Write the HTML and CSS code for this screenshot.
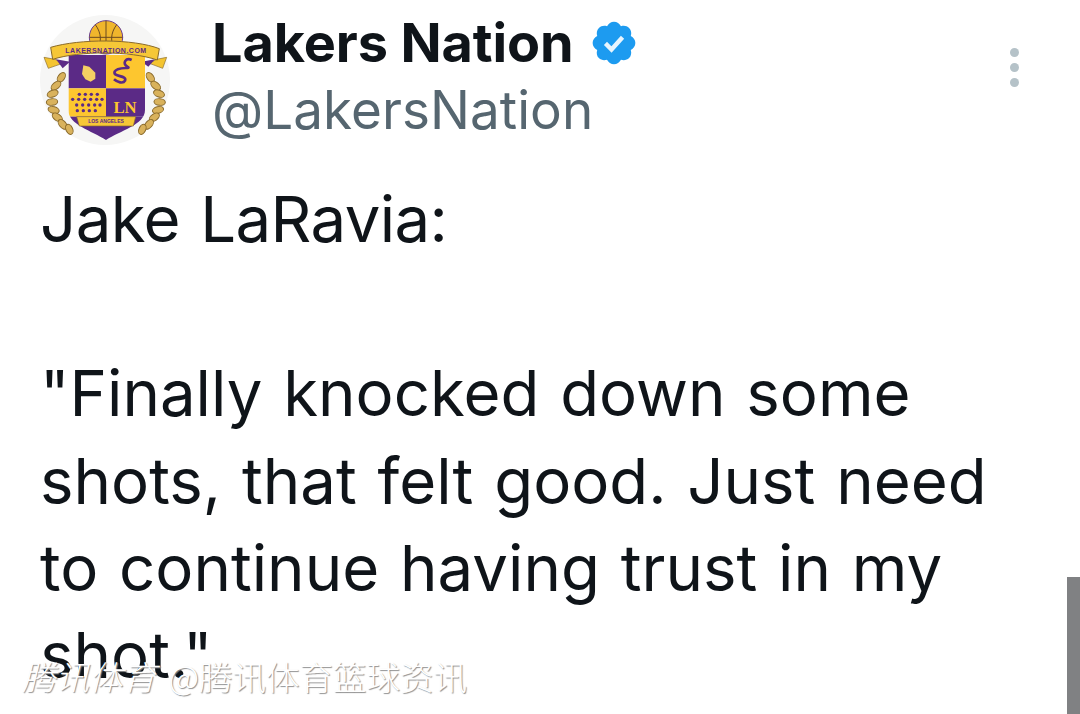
FILE: index.html
```html
<!DOCTYPE html>
<html lang="zh-CN">
<head>
    <meta charset="UTF-8">
    <meta name="viewport" content="width=device-width, initial-scale=1.0">
    <title>Lakers Nation</title>
    <link rel="stylesheet" href="styles.css">
</head>
<body>
    <div class="tweet">
        <header class="tweet-head">
            <svg class="avatar" viewBox="60 45 390 390" aria-label="Lakers Nation logo">
                <defs>
                    <clipPath id="shield"><path d="M145 165H375V330C375 375 300 392 258 420C216 392 145 375 145 330Z"/></clipPath>
                    <g id="laurel" fill="#d9b25c" stroke="#8a6a2a" stroke-width="3">
                        <ellipse cx="124" cy="232" rx="10" ry="16" transform="rotate(35 124 232)"/>
                        <ellipse cx="108" cy="257" rx="10" ry="17" transform="rotate(50 108 257)"/>
                        <ellipse cx="98" cy="281" rx="10" ry="17" transform="rotate(70 98 281)"/>
                        <ellipse cx="96" cy="306" rx="10" ry="17" transform="rotate(85 96 306)"/>
                        <ellipse cx="101" cy="330" rx="10" ry="17" transform="rotate(105 101 330)"/>
                        <ellipse cx="112" cy="352" rx="10" ry="17" transform="rotate(125 112 352)"/>
                        <ellipse cx="128" cy="373" rx="10" ry="17" transform="rotate(140 128 373)"/>
                        <ellipse cx="148" cy="388" rx="10" ry="16" transform="rotate(155 148 388)"/>
                    </g>
                </defs>
                <circle cx="255" cy="240" r="195" fill="#f6f6f5"/>
                <use href="#laurel"/>
                <use href="#laurel" transform="matrix(-1 0 0 1 515 0)"/>
                <circle cx="258" cy="112" r="50" fill="#f0b62c" stroke="#6b3f8f" stroke-width="3"/>
                <path d="M258 62V150M208 112H308M226 74C245 100 245 125 232 148M290 74C271 100 271 125 284 148" fill="none" stroke="#6b4a20" stroke-width="3"/>
                <path d="M105 178L72 172L85 205L128 190ZM410 178L440 172L428 205L388 190Z" fill="#f4c430" stroke="#8a6a2a" stroke-width="2"/>
                <path d="M108 178L128 205L150 185ZM405 178L385 200L365 185Z" fill="#5b2a86"/>
                <g clip-path="url(#shield)">
                    <rect x="145" y="165" width="113" height="100" fill="#5b2a86"/>
                    <rect x="258" y="165" width="117" height="100" fill="#fdc62f"/>
                    <rect x="145" y="265" width="113" height="85" fill="#fdc62f"/>
                    <rect x="258" y="265" width="117" height="85" fill="#5b2a86"/>
                    <rect x="145" y="350" width="230" height="80" fill="#5b2a86"/>
                    <g fill="#5b2a86">
                        <circle cx="178" cy="283" r="5"/><circle cx="196" cy="283" r="5"/><circle cx="214" cy="283" r="5"/><circle cx="232" cy="283" r="5"/>
                        <circle cx="158" cy="298" r="5"/><circle cx="176" cy="298" r="5"/><circle cx="194" cy="298" r="5"/><circle cx="212" cy="298" r="5"/><circle cx="230" cy="298" r="5"/><circle cx="246" cy="298" r="5"/>
                        <circle cx="170" cy="315" r="5"/><circle cx="188" cy="315" r="5"/><circle cx="206" cy="315" r="5"/><circle cx="224" cy="315" r="5"/><circle cx="240" cy="315" r="5"/>
                        <circle cx="172" cy="332" r="5"/><circle cx="190" cy="332" r="5"/><circle cx="208" cy="332" r="5"/><circle cx="226" cy="332" r="5"/>
                    </g>
                </g>
                <path d="M190 196L208 200L226 218L226 236L212 245L196 238L186 222Z" fill="#f5cf63"/>
                <path d="M335 180C318 172 305 190 322 200C338 208 292 198 284 215C278 232 322 225 315 242C310 252 292 247 282 238" fill="none" stroke="#5b2a86" stroke-width="8"/>
                <text class="logo-ln" x="315" y="338">LN</text>
                <path d="M92 142C180 116 340 116 418 146L412 180C330 152 180 152 98 178Z" fill="#f6c737" stroke="#8a6a2a" stroke-width="3"/>
                <text class="logo-ribbon" x="258" y="158">LAKERSNATION.COM</text>
                <path d="M170 350H347L340 378H178Z" fill="#f6c737" stroke="#8a6a2a" stroke-width="2"/>
                <text class="logo-city" x="258" y="370">LOS ANGELES</text>
            </svg>
            <div class="names">
                <div class="display-name">
                    <span>Lakers Nation</span>
                    <svg class="badge" viewBox="0 0 24 24" aria-label="Verified">
                        <path fill="#1d9bf0" d="M22.25 12c0-1.43-.88-2.67-2.19-3.34.46-1.39.2-2.9-.81-3.91s-2.52-1.27-3.91-.81c-.66-1.31-1.91-2.19-3.34-2.19s-2.67.88-3.33 2.19c-1.4-.46-2.91-.2-3.92.81s-1.26 2.52-.8 3.91C2.63 9.33 1.75 10.57 1.75 12s.88 2.67 2.19 3.34c-.46 1.39-.21 2.9.8 3.91s2.52 1.26 3.91.81c.67 1.31 1.91 2.19 3.34 2.19s2.68-.88 3.34-2.19c1.39.45 2.9.2 3.91-.81s1.27-2.52.81-3.91c1.31-.67 2.19-1.91 2.19-3.34z"/>
                        <path fill="none" stroke="#e8f5fe" stroke-width="2.1" d="M7.9 12.2l2.9 2.9 5.3-5.9"/>
                    </svg>
                </div>
                <div class="handle">@LakersNation</div>
            </div>
            <div class="more"><i></i><i></i><i></i></div>
        </header>
        <p class="tweet-text"><span class="tight">Jake LaRavia:</span>

"Finally knocked down some
shots, that felt good. Just need
to continue having trust in my
shot."</p>
    </div>

    <div class="scroll-thumb"></div>
    <div class="watermark"><em>腾讯体育</em> @腾讯体育篮球资讯</div>
</body>
</html>
```

FILE: styles.css
```css
html, body { margin: 0; height: 714px; overflow: hidden; background: #fff; }
body { position: relative; font-family: Inter, "Noto Sans", sans-serif; color: #0f1419; }

.tweet { padding: 15px 40px 0; }
.tweet-head { display: flex; align-items: flex-start; }
.avatar { width: 130px; height: 130px; flex: none; }
.names { margin-left: 42px; padding-top: 2px; flex: 1; }
.display-name { display: flex; align-items: center; gap: 15px; font-size: 54px; font-weight: 700; line-height: 52px; letter-spacing: -0.1px; }
.badge { width: 50px; height: 50px; }
.handle { margin-top: 15px; font-size: 53px; line-height: 52px; color: #566670; letter-spacing: 0.05px; }
.more { display: flex; flex-direction: column; gap: 6px; margin: 33px 21px 0 0; }
.more i { width: 9px; height: 9px; border-radius: 50%; background: #b5c2c8; }

.tweet-text { margin: 30px 0 0; font-size: 63.5px; line-height: 87.2px; word-spacing: 3px; white-space: pre-line; }
.tight { letter-spacing: -0.6px; }

.logo-ln { font: 700 50px "Liberation Serif", serif; fill: #fdc62f; text-anchor: middle; }
.logo-ribbon { font: 700 21px "Liberation Sans", sans-serif; fill: #5b2a86; text-anchor: middle; letter-spacing: 1.5px; }
.logo-city { font: 700 15px "Liberation Sans", sans-serif; fill: #5b2a86; text-anchor: middle; }

.scroll-thumb { position: absolute; left: 1067px; top: 577px; width: 13px; height: 137px; background: #808183; }

.watermark { position: absolute; left: 22px; top: 654px; font: 300 33.5px/44px "Noto Sans CJK SC", sans-serif; color: #fff; white-space: nowrap; word-spacing: 5px; text-shadow: 1px 1px 1px #8f8f8f; }
.watermark em { font-style: italic; }
```
